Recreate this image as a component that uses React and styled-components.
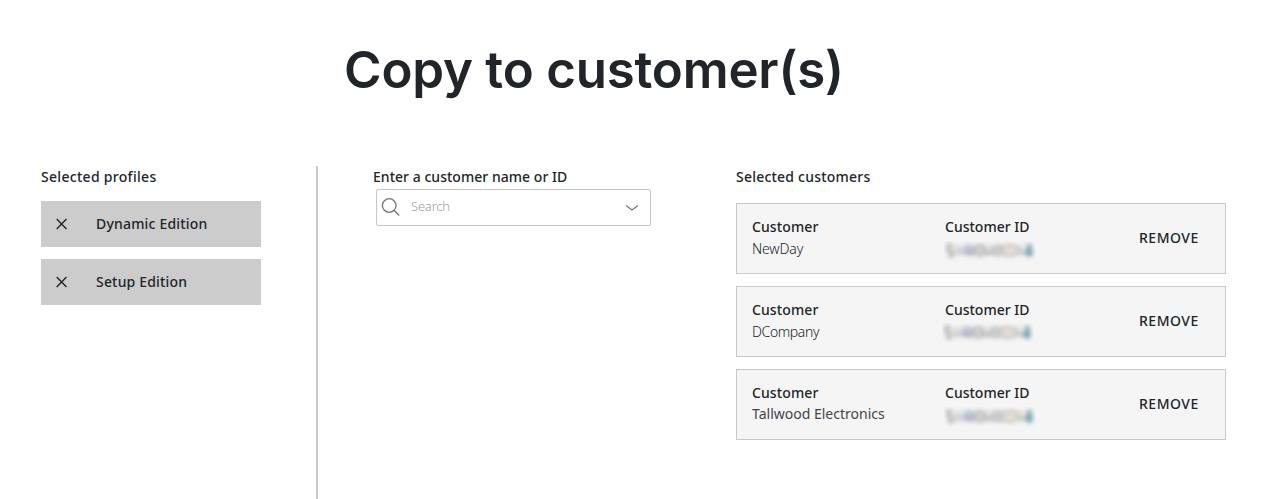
import React from 'react';
import styled, { createGlobalStyle } from 'styled-components';

const GlobalStyle = createGlobalStyle`
  * { box-sizing: border-box; }
  body {
    margin: 0;
    background: #fff;
    color: #212529;
    font: 500 14px/20px "Noto Sans", "Open Sans", sans-serif;
    overflow: hidden;
  }
`;

const Page = styled.main`
  width: 1272px;
  height: 499px;
  overflow: hidden;
`;

const Title = styled.h1`
  margin: 0;
  padding: 39px 0 0 344px;
  height: 166px;
  font: 600 51px/62px Inter, sans-serif;
  letter-spacing: -0.2px;
  white-space: nowrap;
`;

const Columns = styled.div`
  display: flex;
  height: 333px;
`;

const Profiles = styled.section`
  width: 318px;
  padding: 1px 55px 0 41px;
  border-right: 2px solid #c8c8c8;
`;

const Search = styled.section`
  width: 418px;
  padding: 1px 84px 0 55px;
`;

const Customers = styled.section`
  width: 490px;
  padding-top: 1px;
`;

const Text = styled.span`
  display: block;
  white-space: nowrap;
  font-weight: ${(p) => p.$weight || 500};
  letter-spacing: ${(p) => p.$track || 0}px;
`;

const ProfileList = styled.div`
  display: grid;
  gap: 12px;
  margin-top: 14px;
`;

const Profile = styled.div`
  display: flex;
  align-items: center;
  height: 46px;
  padding-left: 15px;
  gap: 28px;
  background: #cccccc;
`;

const Field = styled.div`
  display: flex;
  align-items: center;
  width: 275px;
  height: 37px;
  margin: 2px 0 0 3px;
  padding: 0 11px 0 4px;
  border: 1px solid #c6c6c6;
  border-radius: 2px;
`;

const Placeholder = styled(Text)`
  flex: 1;
  margin-left: 10px;
  padding-bottom: 3px;
  color: #9c9c9c;
  font-size: 13px;
`;

const CustomerList = styled.div`
  display: grid;
  gap: 12px;
  margin-top: 16px;
`;

const Card = styled.article`
  display: grid;
  grid-template-columns: 193px 194px 1fr;
  height: 71px;
  padding: 13px 0 0 15px;
  border: 1px solid #c8c8c8;
  background: #f5f5f5;
`;

const Name = styled(Text)`
  margin-top: ${(p) => p.$gap}px;
  color: ${(p) => p.$color};
`;

const Remove = styled(Text)`
  padding-top: 11px;
`;

const Masked = styled.svg`
  display: block;
  margin: ${(p) => p.$top}px 0 0 ${(p) => p.$left}px;
`;

const CloseIcon = () => (
  <svg width="12" height="12" viewBox="0 0 12 12" fill="none" stroke="#212529" strokeWidth="1.4">
    <path d="M.7 1l9.8 10M10.5 1L.7 11" />
  </svg>
);

const SearchIcon = () => (
  <svg width="20" height="20" viewBox="0 0 20 20" fill="none" stroke="#747474" strokeWidth="1.3">
    <circle cx="8.2" cy="7.5" r="6.8" />
    <path d="M13 12.3l5.2 5.2" />
  </svg>
);

const ChevronIcon = () => (
  <svg width="14" height="8" viewBox="0 0 14 8" fill="none" stroke="#747474" strokeWidth="1.1">
    <path d="M1 1.5l6 4.5 6-4.5" />
  </svg>
);

const MaskedId = ({ id, top, left }) => (
  <Masked width="92" height="20" $top={top} $left={left} aria-hidden="true">
    <filter id={id} x="-10%" y="-30%" width="120%" height="160%" colorInterpolationFilters="sRGB">
      <feGaussianBlur stdDeviation="1.9" />
    </filter>
    <g filter={`url(#${id})`}>
      <path d="M3 9h84" stroke="#e4e3e2" strokeWidth="11" />
      <path d="M8 4H4v5l4 2v4H4" fill="none" stroke="#b4b4b5" strokeWidth="3" />
      <path d="M10 9v6" stroke="#dccfbd" strokeWidth="4" />
      <path d="M15 7v7" stroke="#c5d1d8" strokeWidth="4" />
      <path d="M25 3l-5 8h8V4v11" fill="none" stroke="#b6bfd2" strokeWidth="3.5" />
      <path d="M22 12h6" stroke="#b3a6bf" strokeWidth="4" />
      <ellipse cx="36" cy="9.5" rx="5.5" ry="5.2" fill="#d3d2d2" stroke="#bab8b6" strokeWidth="2.5" />
      <path d="M41 12h8" stroke="#b8b9ba" strokeWidth="3.5" />
      <ellipse cx="54" cy="9.5" rx="6" ry="5" fill="#cdcfd3" stroke="#bebcbb" strokeWidth="2" />
      <ellipse cx="66" cy="9.5" rx="9" ry="5.5" fill="#e4ddd7" stroke="#c2bebb" strokeWidth="2" />
      <path d="M76 12h6" stroke="#b7bec4" strokeWidth="3" />
      <path d="M85.5 3v13M81 11h8" stroke="#82a5b8" strokeWidth="4.5" />
    </g>
  </Masked>
);

const profiles = ['Dynamic Edition', 'Setup Edition'];

const customers = [
  { name: 'NewDay', weight: 300, track: -0.15, gap: 2, color: '#212529', top: 4, left: -1 },
  { name: 'DCompany', weight: 300, track: -0.4, gap: 2, color: '#212529', top: 3, left: -3 },
  { name: 'Tallwood Electronics', weight: 400, track: 0, gap: 1, color: '#44444a', top: 4, left: -1 },
];

export default function App() {
  return (
    <Page>
      <GlobalStyle />
      <Title>Copy to customer(s)</Title>
      <Columns>
        <Profiles>
          <Text $track={0.3}>Selected profiles</Text>
          <ProfileList>
            {profiles.map((name) => (
              <Profile key={name}>
                <CloseIcon />
                <Text $track={0.18}>{name}</Text>
              </Profile>
            ))}
          </ProfileList>
        </Profiles>
        <Search>
          <Text $track={0.03}>Enter a customer name or ID</Text>
          <Field>
            <SearchIcon />
            <Placeholder $weight={300} $track={-0.2}>Search</Placeholder>
            <ChevronIcon />
          </Field>
        </Search>
        <Customers>
          <Text $track={0.22}>Selected customers</Text>
          <CustomerList>
            {customers.map((c) => (
              <Card key={c.name}>
                <div>
                  <Text $track={0.1}>Customer</Text>
                  <Name $weight={c.weight} $track={c.track} $gap={c.gap} $color={c.color}>{c.name}</Name>
                </div>
                <div>
                  <Text>Customer ID</Text>
                  <MaskedId id={`mask-${c.name.replace(' ', '-')}`} top={c.top} left={c.left} />
                </div>
                <Remove $track={0.5}>REMOVE</Remove>
              </Card>
            ))}
          </CustomerList>
        </Customers>
      </Columns>
    </Page>
  );
}
